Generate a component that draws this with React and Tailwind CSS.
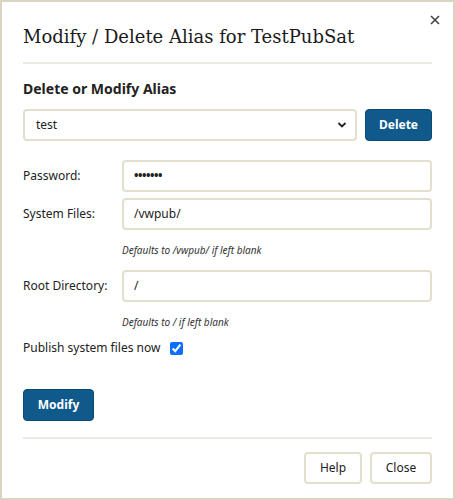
import React from "react";

const sans = { fontFamily: '"Noto Sans", "Open Sans", sans-serif' };

function Field({ label, value, hint, password }) {
  return (
    <div className="flex flex-col">
      <div className="flex items-center">
        <div className="w-[99px] shrink-0 text-[12px] text-[#222]">{label}</div>
        <div className="flex-1 h-[32px] rounded-[4px] border-2 border-[#e3dfcf] bg-white flex items-center px-[10px] text-[12px] text-[#222]">
          {password ? (
            <span className="text-[12px] font-bold leading-none tracking-[-0.5px]">•••••••</span>
          ) : (
            value
          )}
        </div>
      </div>
      {hint && (
        <div className="pl-[99px] mt-[12px] h-[16px] leading-[16px] text-[10px] italic text-[#333]">{hint}</div>
      )}
    </div>
  );
}

export default function App() {
  return (
    <div
      className="relative w-[455px] h-[500px] bg-white border-2 border-[#d9d5c1] px-[21px] pt-[21px] flex flex-col"
      style={sans}
    >
      <div className="absolute top-[13px] right-[13px] leading-none">
        <svg width="10" height="10" viewBox="0 0 10 10">
          <path d="M1 1L9 9M9 1L1 9" stroke="#444" strokeWidth="1.6" />
        </svg>
      </div>
      <div
        className="h-[28px] leading-[28px] text-[18px] text-[#1a1a1a]"
        style={{ fontFamily: '"DejaVu Serif", "Liberation Serif", serif' }}
      >
        Modify / Delete Alias for TestPubSat
      </div>
      <div className="mt-[11px] h-[2px] bg-[#ece9df]" />
      <div className="mt-[15px] h-[20px] leading-[20px] text-[14px] font-bold text-[#222]">
        Delete or Modify Alias
      </div>
      <div className="mt-[10px] flex gap-[8px]">
        <div className="flex-1 h-[32px] rounded-[4px] border-2 border-[#e3dfcf] flex items-center justify-between pl-[11px] pr-[8px] text-[12px] text-[#222]">
          <span>test</span>
          <svg width="10" height="8" viewBox="0 0 10 8">
            <path d="M1.5 2L5 5.5L8.5 2" stroke="#222" strokeWidth="1.8" fill="none" />
          </svg>
        </div>
        <div className="w-[67px] h-[32px] rounded-[4px] bg-[#0f5a8b] border border-[#0b4a74] flex items-center justify-center text-white font-bold text-[12px]">
          Delete
        </div>
      </div>
      <div className="mt-[19px] flex flex-col gap-[6px]">
        <Field label="Password:" password />
        <Field label="System Files:" value="/vwpub/" hint="Defaults to /vwpub/ if left blank" />
      </div>
      <div className="mt-[12px]">
        <Field label="Root Directory:" value="/" hint="Defaults to / if left blank" />
      </div>
      <div className="mt-[8px] h-[20px] flex items-center gap-[10px] text-[12px] text-[#222]">
        <span>Publish system files now</span>
        <input type="checkbox" defaultChecked className="w-[13px] h-[13px] accent-[#0d6efd] m-0" />
      </div>
      <div className="mt-[31px]">
        <div className="w-[71px] h-[32px] rounded-[4px] bg-[#0f5a8b] border border-[#0b4a74] flex items-center justify-center text-white font-bold text-[12px]">
          Modify
        </div>
      </div>
      <div className="mt-[16px] h-[2px] bg-[#ece9df]" />
      <div className="mt-[13px] flex justify-end gap-[8px]">
        <div className="w-[58px] h-[32px] rounded-[4px] border-2 border-[#e3dfcf] flex items-center justify-center text-[12px] text-[#222]">
          Help
        </div>
        <div className="w-[62px] h-[32px] rounded-[4px] border-2 border-[#e3dfcf] flex items-center justify-center text-[12px] text-[#222]">
          Close
        </div>
      </div>
    </div>
  );
}
